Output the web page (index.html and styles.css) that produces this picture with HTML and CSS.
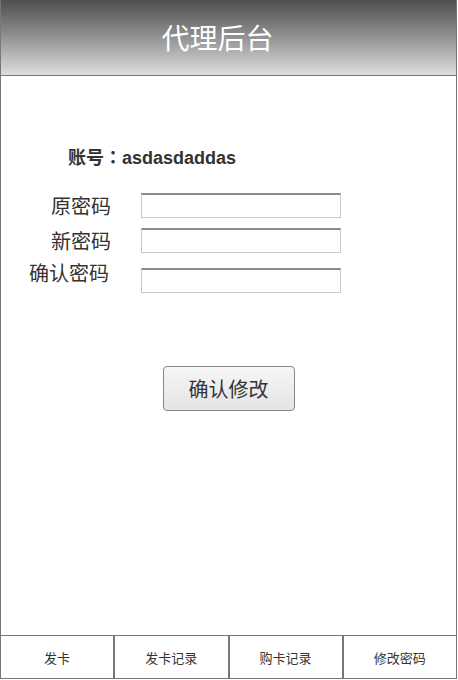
FILE: index.html
```html
<!DOCTYPE html>
<html lang="zh-CN">
<head>
<meta charset="utf-8">
<title>代理后台</title>
<link rel="stylesheet" href="styles.css">
</head>
<body>
<div class="app">
  <header class="topbar">代理后台</header>
  <main class="content">
    <div class="account">账号<span class="colon" lang="zh-TW">：</span>asdasdaddas</div>
    <form class="pwd-form">
      <div class="row">
        <label class="label">原密码</label>
        <input class="field" type="password">
      </div>
      <div class="row row-2">
        <label class="label">新密码</label>
        <input class="field" type="password">
      </div>
      <div class="row row-3">
        <label class="label">确认密码</label>
        <input class="field" type="password">
      </div>
      <div class="actions">
        <button class="btn" type="button">确认修改</button>
      </div>
    </form>
  </main>
  <nav class="tabbar">
    <a class="tab">发卡</a>
    <a class="tab">发卡记录</a>
    <a class="tab">购卡记录</a>
    <a class="tab">修改密码</a>
  </nav>
</div>
</body>
</html>
```
FILE: styles.css
```css
* { box-sizing: border-box; }
html, body { margin: 0; padding: 0; background: #fff; }
body {
  font-family: "Liberation Sans", "Noto Sans CJK SC", sans-serif;
  color: #333;
}
.app {
  width: 457px;
  height: 679px;
  border-left: 1px solid #777;
  border-right: 1px solid #777;
  display: flex;
  flex-direction: column;
}
.topbar {
  height: 76px;
  border-bottom: 1px solid #777;
  background: linear-gradient(to bottom, #4e4e4e 0%, #8c8c8c 45%, #dedede 100%);
  color: #fff;
  font-family: "Noto Sans CJK SC", sans-serif;
  font-size: 28px;
  line-height: 75px;
  text-align: center;
  padding-right: 22px;
}
.content {
  flex: 1;
  padding-top: 70px;
}
.account {
  font-size: 18px;
  font-weight: bold;
  line-height: 24px;
  height: 24px;
  padding-left: 67px;
  color: #333;
}
.colon {
  font-family: "Noto Sans CJK TC", sans-serif;
  line-height: 1;
}
.pwd-form { margin: 23px 0 0; }
.row {
  display: flex;
  align-items: center;
  height: 25px;
}
.row-2 { margin-top: 10px; }
.row-3 { margin-top: 7px; align-items: flex-start; height: 33px; }
.label {
  width: 110px;
  text-align: right;
  font-family: "Noto Sans CJK SC", sans-serif;
  font-size: 20px;
  line-height: 26px;
  color: #333;
}
.row-3 .label { width: 108px; margin-right: 2px; }
.field {
  margin-left: 30px;
  width: 200px;
  height: 25px;
  padding: 0 3px;
  border: 1px solid #c8c8c8;
  border-top: 2px solid #8a8a8a;
  background: #fff;
  outline: none;
}
.row-3 .field { margin-top: 8px; }
.actions {
  display: flex;
  justify-content: center;
  margin-top: 73px;
}
.btn {
  width: 132px;
  height: 45px;
  border: 1px solid #888;
  border-radius: 4px;
  background: linear-gradient(to bottom, #f6f6f6, #e4e4e4);
  font-family: "Noto Sans CJK SC", sans-serif;
  font-size: 20px;
  color: #333;
  padding: 0;
}
.tabbar {
  display: flex;
  height: 44px;
  border-top: 1px solid #777;
  border-bottom: 1px solid #777;
}
.tab {
  flex: 1;
  display: flex;
  align-items: center;
  justify-content: center;
  font-family: "Noto Sans CJK SC", sans-serif;
  font-size: 13px;
  color: #333;
}
.tab + .tab { border-left: 2px solid #777; }
```
